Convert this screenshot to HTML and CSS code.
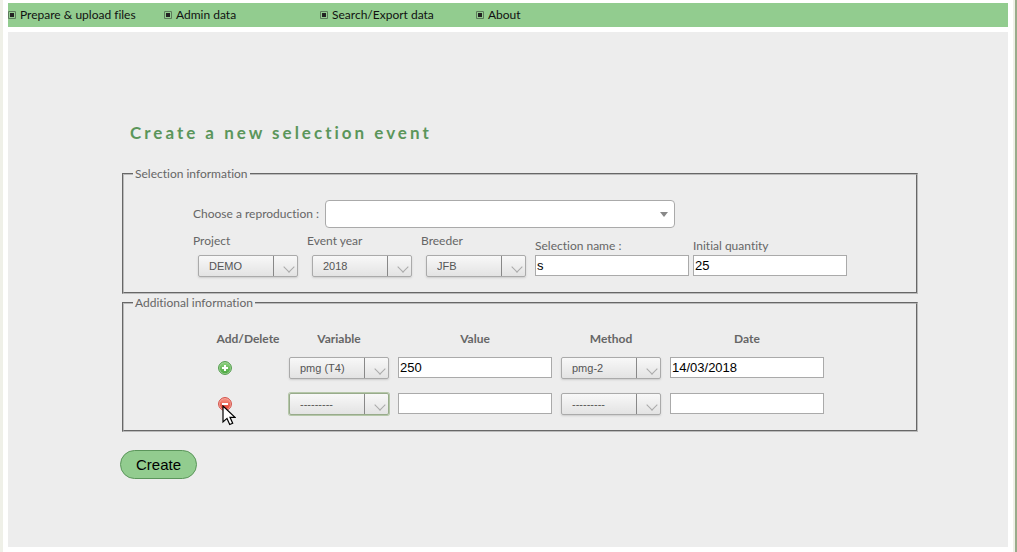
FILE: index.html
```html
<!DOCTYPE html>
<html lang="en">
<head>
<meta charset="utf-8">
<title>Create a new selection event</title>
<link rel="stylesheet" href="styles.css">
</head>
<body>
<div class="page">
  <nav class="menu">
    <a class="menu-item" href="#"><span class="bullet"></span>Prepare &amp; upload files</a>
    <a class="menu-item" href="#"><span class="bullet"></span>Admin data</a>
    <a class="menu-item" href="#"><span class="bullet"></span>Search/Export data</a>
    <a class="menu-item" href="#"><span class="bullet"></span>About</a>
  </nav>
  <main class="content">
    <h1 class="title">Create a new selection event</h1>
    <form class="form">
      <fieldset class="group">
        <legend>Selection information</legend>
        <div class="selection">
          <div class="reproduction">
            <label for="reproduction">Choose a reproduction :</label>
            <span class="combo"><select id="reproduction"><option></option></select></span>
          </div>
          <div class="fields">
            <div class="field field-pick">
              <label for="project">Project</label>
              <span class="pick"><select id="project"><option>DEMO</option></select></span>
            </div>
            <div class="field field-pick">
              <label for="year">Event year</label>
              <span class="pick"><select id="year"><option>2018</option></select></span>
            </div>
            <div class="field field-pick">
              <label for="breeder">Breeder</label>
              <span class="pick"><select id="breeder"><option>JFB</option></select></span>
            </div>
            <div class="field field-text">
              <label for="name">Selection name :</label>
              <input class="text" id="name" type="text" value="s">
            </div>
            <div class="field field-text">
              <label for="quantity">Initial quantity</label>
              <input class="text" id="quantity" type="text" value="25">
            </div>
          </div>
        </div>
      </fieldset>
      <fieldset class="group">
        <legend>Additional information</legend>
        <div class="additional">
          <table class="variables">
            <thead>
              <tr><th>Add/Delete</th><th>Variable</th><th>Value</th><th>Method</th><th>Date</th></tr>
            </thead>
            <tbody>
              <tr>
                <td class="action">
                  <button class="icon-button" type="button" aria-label="Add">
                    <svg viewBox="0 0 14 14" width="14" height="14">
                      <defs><linearGradient id="green" x1="0" y1="0" x2="0" y2="1"><stop offset="0" stop-color="#8bd07c"/><stop offset="1" stop-color="#4fa943"/></linearGradient></defs>
                      <circle cx="7" cy="7" r="6.4" fill="#a9dba0" stroke="#479541" stroke-width="1"/>
                      <circle cx="7" cy="7" r="5.3" fill="url(#green)"/>
                      <path d="M7 4v6M4 7h6" stroke="#fff" stroke-width="2"/>
                    </svg>
                  </button>
                </td>
                <td><span class="pick"><select aria-label="Variable"><option>pmg (T4)</option></select></span></td>
                <td><input class="text" type="text" aria-label="Value" value="250"></td>
                <td><span class="pick"><select aria-label="Method"><option>pmg-2</option></select></span></td>
                <td><input class="text" type="text" aria-label="Date" value="14/03/2018"></td>
              </tr>
              <tr>
                <td class="action">
                  <button class="icon-button" type="button" aria-label="Delete">
                    <svg viewBox="0 0 14 14" width="14" height="14">
                      <defs><linearGradient id="red" x1="0" y1="0" x2="0" y2="1"><stop offset="0" stop-color="#f79384"/><stop offset="1" stop-color="#e5402f"/></linearGradient></defs>
                      <circle cx="7" cy="7" r="6.4" fill="#f8b3aa" stroke="#d0443b" stroke-width="1"/>
                      <circle cx="7" cy="7" r="5.3" fill="url(#red)"/>
                      <path d="M4 7h6" stroke="#fff" stroke-width="2"/>
                    </svg>
                  </button>
                  <svg class="pointer" viewBox="0 0 14 21" width="14" height="21" aria-hidden="true">
                    <path d="M1 1v16l4-3.6 2.7 6.1 3-1.3L8 12.3h5z" fill="#fff" stroke="#000" stroke-width="1.2"/>
                  </svg>
                </td>
                <td><span class="pick pick-active"><select aria-label="Variable"><option>---------</option></select></span></td>
                <td><input class="text" type="text" aria-label="Value"></td>
                <td><span class="pick"><select aria-label="Method"><option>---------</option></select></span></td>
                <td><input class="text" type="text" aria-label="Date"></td>
              </tr>
            </tbody>
          </table>
        </div>
      </fieldset>
      <button class="create" type="button">Create</button>
    </form>
  </main>
</div>
</body>
</html>
```
FILE: styles.css
```css
* {
  box-sizing: border-box;
}

body {
  margin: 0;
  background: #98ab8b;
  color: #666;
  font: 12px/16px "Trebuchet MS", Lato, sans-serif;
  font-variant-ligatures: none;
}

.page {
  display: flex;
  flex-direction: column;
  gap: 5px;
  min-height: 100vh;
  margin-right: 2px;
  padding: 3px 5px 5px;
  border: solid #eff0e8;
  border-width: 0 2px 0 3px;
  background: #fff;
}

.menu {
  display: flex;
  height: 24px;
  background: #92cc8f;
}

.menu-item {
  display: flex;
  align-items: center;
  gap: 4px;
  width: 156px;
  color: #111;
  text-decoration: none;
  white-space: nowrap;
}

.bullet {
  width: 8px;
  height: 8px;
  border: 1px solid #5c7a5b;
  border-radius: 1px;
  background: #222;
  box-shadow: inset 0 0 0 1px #92cc8f;
}

.content {
  flex: 1;
  padding: 91px 90px 40px 114px;
  background: #ededed;
}

.title {
  margin: 0 0 23px 8px;
  color: #5b965b;
  font-size: 17px;
  line-height: 20px;
  letter-spacing: 3px;
}

.group {
  min-width: 0;
  margin: 0;
  padding: 0;
  border: 2px groove #bbb;
}

.group + .group {
  margin-top: 1px;
}

.group legend {
  margin-left: 9px;
  padding: 0 2px;
}

.selection {
  padding: 18px 0 15px 69px;
}

.additional {
  padding: 17px 0 8px 83px;
}

.reproduction {
  display: flex;
  align-items: center;
  gap: 6px;
  margin-bottom: 5px;
}

.combo {
  position: relative;
  width: 350px;
}

.combo select {
  display: block;
  width: 100%;
  height: 28px;
  border: 1px solid #aaa;
  border-radius: 4px;
  background: #fff;
  appearance: none;
}

.combo::after {
  content: "";
  position: absolute;
  top: 12px;
  right: 7px;
  border: solid transparent;
  border-width: 5px 4px 0;
  border-top-color: #888;
}

.fields {
  display: flex;
}

.field {
  display: flex;
  flex-direction: column;
}

.field-pick {
  width: 114px;
  gap: 6px;
}

.field-pick .pick {
  margin-left: 5px;
}

.field-text {
  width: 158px;
  padding-top: 5px;
  gap: 1px;
}

.pick {
  position: relative;
  display: block;
  width: 100px;
}

.pick select {
  display: block;
  width: 100%;
  height: 22px;
  padding: 0 26px 0 10px;
  border: 1px solid #aaa;
  border-radius: 2px;
  background: linear-gradient(90deg, transparent 75px, #888 75px, #888 76px, transparent 76px), linear-gradient(#f9f9f9, #e2e2e2);
  background-origin: border-box;
  box-shadow: 0 1px 2px #ccc;
  color: #555;
  font: 11px "Liberation Sans", Arial, sans-serif;
  appearance: none;
}

.pick-active select {
  border-color: #98ab8b;
  box-shadow: 0 0 0 1px #b5c7a9;
}

.pick::after {
  content: "";
  position: absolute;
  top: 8px;
  right: 5px;
  width: 7px;
  height: 7px;
  border: solid #aaa;
  border-width: 0 1px 1px 0;
  transform: rotate(45deg);
}

.text {
  display: block;
  width: 154px;
  height: 21px;
  padding: 0 1px;
  border: 1px solid #aaa;
  background: #fff;
  color: #000;
  font: 13px "Liberation Sans", Arial, sans-serif;
}

.variables {
  border-spacing: 9px 0;
}

.variables th {
  height: 22px;
  padding: 0;
}

.variables td {
  height: 36px;
  padding: 7px 0 0;
  vertical-align: top;
}

.variables th:first-child {
  width: 64px;
}

.action {
  position: relative;
}

.icon-button {
  display: block;
  margin: 4px 0 0 2px;
  padding: 0;
  border: 0;
  background: none;
}

.icon-button svg {
  display: block;
}

.pointer {
  position: absolute;
  top: 19px;
  left: 6px;
}

.create {
  display: block;
  height: 29px;
  margin: 18px 0 0 -2px;
  padding: 0 15px;
  border: 1px solid #5b965b;
  border-radius: 15px;
  background: #92cc8f;
  color: #000;
  font: 15px "Liberation Sans", Arial, sans-serif;
}
```
